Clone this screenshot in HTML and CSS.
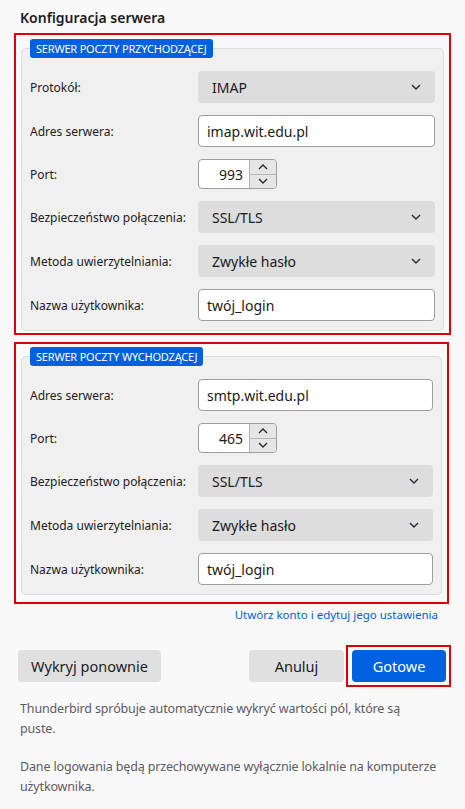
FILE: index.html
```html
<!DOCTYPE html>
<html lang="pl">
<head>
    <meta charset="UTF-8">
    <meta name="viewport" content="width=device-width, initial-scale=1.0">
    <title>Konfiguracja serwera</title>
    <link rel="stylesheet" href="styles.css">
</head>
<body>
    <h2 class="title">Konfiguracja serwera</h2>

    <div class="mark">
        <fieldset class="server">
            <legend class="badge">Serwer poczty przychodzącej</legend>
            <div class="rows">
                <label>Protokół:</label>
                <div class="select">
                    <span>IMAP</span>
                    <svg class="chev" width="10" height="6" viewBox="0 0 10 6"><polyline points="1,1 5,5 9,1"/></svg>
                </div>

                <label>Adres serwera:</label>
                <input class="field" type="text" value="imap.wit.edu.pl">

                <label>Port:</label>
                <div class="spin">
                    <input class="spin-value" type="text" value="993">
                    <div class="spin-buttons">
                        <span><svg width="10" height="6" viewBox="0 0 10 6"><polyline points="1,5 5,1 9,5"/></svg></span>
                        <span><svg width="10" height="6" viewBox="0 0 10 6"><polyline points="1,1 5,5 9,1"/></svg></span>
                    </div>
                </div>

                <label>Bezpieczeństwo połączenia:</label>
                <div class="select">
                    <span>SSL/TLS</span>
                    <svg class="chev" width="10" height="6" viewBox="0 0 10 6"><polyline points="1,1 5,5 9,1"/></svg>
                </div>

                <label>Metoda uwierzytelniania:</label>
                <div class="select">
                    <span>Zwykłe hasło</span>
                    <svg class="chev" width="10" height="6" viewBox="0 0 10 6"><polyline points="1,1 5,5 9,1"/></svg>
                </div>

                <label>Nazwa użytkownika:</label>
                <input class="field" type="text" value="twój_login">
            </div>
        </fieldset>
    </div>

    <div class="mark mark-out">
        <fieldset class="server">
            <legend class="badge">Serwer poczty wychodzącej</legend>
            <div class="rows">
                <label>Adres serwera:</label>
                <input class="field" type="text" value="smtp.wit.edu.pl">

                <label>Port:</label>
                <div class="spin">
                    <input class="spin-value" type="text" value="465">
                    <div class="spin-buttons">
                        <span><svg width="10" height="6" viewBox="0 0 10 6"><polyline points="1,5 5,1 9,5"/></svg></span>
                        <span><svg width="10" height="6" viewBox="0 0 10 6"><polyline points="1,1 5,5 9,1"/></svg></span>
                    </div>
                </div>

                <label>Bezpieczeństwo połączenia:</label>
                <div class="select">
                    <span>SSL/TLS</span>
                    <svg class="chev" width="10" height="6" viewBox="0 0 10 6"><polyline points="1,1 5,5 9,1"/></svg>
                </div>

                <label>Metoda uwierzytelniania:</label>
                <div class="select">
                    <span>Zwykłe hasło</span>
                    <svg class="chev" width="10" height="6" viewBox="0 0 10 6"><polyline points="1,1 5,5 9,1"/></svg>
                </div>

                <label>Nazwa użytkownika:</label>
                <input class="field" type="text" value="twój_login">
            </div>
        </fieldset>
    </div>

    <div class="advanced">
        <a href="#">Utwórz konto i edytuj jego ustawienia</a>
    </div>

    <div class="actions">
        <button class="btn">Wykryj ponownie</button>
        <div class="actions-right">
            <button class="btn btn-cancel">Anuluj</button>
            <span class="mark-btn">
                <button class="btn btn-primary">Gotowe</button>
            </span>
        </div>
    </div>

    <p class="note">Thunderbird spróbuje automatycznie wykryć wartości pól, które są<br>puste.</p>
    <p class="note">Dane logowania będą przechowywane wyłącznie lokalnie na komputerze użytkownika.</p>
</body>
</html>
```

FILE: styles.css
```css
/* Resetting default margin and padding */
* {
    margin: 0;
    padding: 0;
    box-sizing: border-box;
}

body {
    font-family: "Noto Sans", "Open Sans", sans-serif;
    font-size: 12px;
    background-color: #f9f9f9;
    color: #1c1b22;
    padding: 0 14px;
}

.title {
    font-size: 14px;
    font-weight: 600;
    line-height: 20px;
    padding: 8px 0 5px 6px;
}

/* red highlight around each server block */
.mark {
    border: 2px solid #dd0000;
    padding: 4px 5px 2px 5px;
}

.mark-out {
    margin-top: 7px;
    margin-right: 2px;
    padding-top: 3px;
    padding-bottom: 7px;
}

.server {
    border: 1px solid #dcdcdc;
    border-radius: 5px;
    background-color: #f0f0f0;
    padding: 13px 8px 9px 8px;
}

.badge {
    background-color: #0061e0;
    color: #ffffff;
    font-size: 11px;
    line-height: 19px;
    padding: 0 6px;
    border-radius: 3px;
    text-transform: uppercase;
    letter-spacing: -0.2px;
}

.rows {
    display: grid;
    grid-template-columns: 168px 1fr;
    row-gap: 12px;
    align-items: center;
}

.rows label {
    font-size: 12px;
    color: #1c1b22;
}

.select {
    height: 32px;
    background-color: #dddddd;
    border-radius: 4px;
    display: flex;
    align-items: center;
    justify-content: space-between;
    padding: 0 14px 0 14px;
    font-size: 14px;
}

.chev polyline,
.spin-buttons polyline {
    fill: none;
    stroke: #2b2a33;
    stroke-width: 1.4;
}

.field {
    height: 32px;
    width: 100%;
    border: 1px solid #9e9e9e;
    border-radius: 4px;
    background-color: #ffffff;
    font-family: inherit;
    font-size: 14px;
    color: #1c1b22;
    padding: 0 8px;
}

.spin {
    width: 79px;
    height: 30px;
    display: flex;
    border: 1px solid #9e9e9e;
    border-radius: 4px;
    background-color: #ffffff;
    overflow: hidden;
}

.spin-value {
    width: 50px;
    border: none;
    background: transparent;
    font-family: inherit;
    font-size: 14px;
    text-align: right;
    padding-right: 6px;
    color: #1c1b22;
}

.spin-buttons {
    flex: 1;
    display: flex;
    flex-direction: column;
    border-left: 1px solid #b5b5b5;
    background-color: #e6e6e6;
}

.spin-buttons span {
    flex: 1;
    display: flex;
    align-items: center;
    justify-content: center;
}

.spin-buttons span + span {
    border-top: 1px solid #b5b5b5;
}

.advanced {
    text-align: right;
    padding: 3px 13px 0 0;
    line-height: 16px;
}

.advanced a {
    color: #0060df;
    font-size: 11.5px;
    text-decoration: none;
}

.actions {
    display: flex;
    justify-content: space-between;
    align-items: center;
    padding: 22px 0 0 4px;
}

.actions-right {
    display: flex;
    align-items: center;
    gap: 2px;
}

.mark-btn {
    display: flex;
    border: 2px solid #dd0000;
    padding: 3px 3px 3px 4px;
}

.btn {
    height: 32px;
    border: none;
    border-radius: 4px;
    background-color: #e0e0e0;
    color: #1c1b22;
    font-family: inherit;
    font-size: 14.5px;
    padding: 0 13px;
}

.btn-cancel {
    width: 95px;
}

.btn-primary {
    width: 94px;
    background-color: #0061e0;
    color: #ffffff;
}

.note {
    font-size: 12.5px;
    letter-spacing: -0.15px;
    line-height: 20px;
    color: #5b5b66;
    padding: 0 0 0 6px;
    margin-top: 12px;
}

.note + .note {
    margin-top: 18px;
}
```
